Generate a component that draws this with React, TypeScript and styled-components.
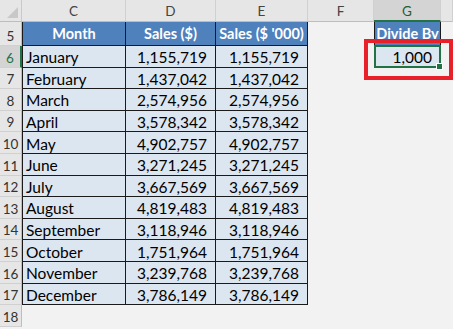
import React from 'react';
import styled, { createGlobalStyle, css } from 'styled-components';

const GlobalStyle = createGlobalStyle`
  html, body {
    margin: 0;
    padding: 0;
    background: #f2f2f2;
    overflow: hidden;
  }
`;

const SheetWrapper = styled.div`
  position: relative;
  width: 453px;
  height: 329px;
  overflow: hidden;
  background: #f2f2f2;
  font-family: Lato, 'Liberation Sans', sans-serif;
`;

const Grid = styled.div`
  display: grid;
  grid-template-columns: 22px 104px 90px 92px 66px 67px 1fr;
  grid-template-rows: 22px 24px repeat(13, 21.6px);
`;

const Corner = styled.div`
  background: #e6e6e6;
  border-right: 1px solid #c9c9c9;
  border-bottom: 1px solid #bdbdbd;
  position: relative;

  &::after {
    content: '';
    position: absolute;
    right: 3px;
    bottom: 3px;
    width: 0;
    height: 0;
    border-left: 11px solid transparent;
    border-bottom: 11px solid #c8c8c8;
  }
`;

const ColHead = styled.div<{ $active?: boolean }>`
  display: flex;
  align-items: center;
  justify-content: center;
  background: #e6e6e6;
  border-right: 1px solid #d0d0d0;
  border-bottom: 1px solid #bdbdbd;
  color: #444;
  font-size: 13.5px;
  padding-top: 1px;

  ${(p) =>
    p.$active &&
    css`
      background: #d4d4d4;
      border-bottom: 2px solid #217346;
      color: #1e5f3a;
    `}
`;

const RowHead = styled.div<{ $active?: boolean }>`
  display: flex;
  align-items: flex-end;
  justify-content: center;
  background: #e6e6e6;
  border-right: 1px solid #bdbdbd;
  border-bottom: 1px solid #d0d0d0;
  color: #333;
  font-size: 13.5px;
  padding-bottom: 1px;
  box-sizing: border-box;

  ${(p) =>
    p.$active &&
    css`
      background: #d4d4d4;
      border-right: 2px solid #217346;
      color: #217346;
    `}
`;

const HeadCell = styled.div<{ $first?: boolean }>`
  display: flex;
  align-items: center;
  justify-content: center;
  background: #4f81bd;
  color: #fff;
  font-weight: 700;
  font-size: 14.5px;
  white-space: nowrap;
  overflow: hidden;
  border-right: 1px solid #1a1a1a;
  border-bottom: 1px solid #1a1a1a;
  ${(p) => p.$first && 'border-left: 1px solid #1a1a1a;'}
  box-sizing: border-box;
`;

const DataCell = styled.div<{ $align?: 'left' | 'right'; $first?: boolean }>`
  display: flex;
  align-items: center;
  justify-content: ${(p) => (p.$align === 'left' ? 'flex-start' : 'flex-end')};
  padding: ${(p) => (p.$align === 'left' ? '2px 0 0 3px' : '2px 8px 0 0')};
  background: #dce6f1;
  color: #000;
  font-size: 15.5px;
  white-space: nowrap;
  border-right: 1px solid #1a1a1a;
  border-bottom: 1px solid #1a1a1a;
  ${(p) => p.$first && 'border-left: 1px solid #1a1a1a;'}
  box-sizing: border-box;
`;

const Blank = styled.div``;

const SelectedCell = styled.div`
  position: relative;
  display: flex;
  align-items: center;
  justify-content: flex-end;
  padding: 2px 7px 0 0;
  background: #dce6f1;
  color: #000;
  font-size: 15.5px;
  border: 2px solid #217346;
  margin: -1px 0 0 0;
  box-sizing: border-box;

  &::after {
    content: '';
    position: absolute;
    right: -4px;
    bottom: -4px;
    width: 5px;
    height: 5px;
    background: #217346;
    border: 1px solid #fff;
  }
`;

const Callout = styled.div`
  position: absolute;
  left: 364px;
  top: 39px;
  width: 89px;
  height: 41px;
  border: 4px solid #e8202a;
  box-sizing: border-box;
  pointer-events: none;
`;

const months: [string, string][] = [
  ['January', '1,155,719'],
  ['February', '1,437,042'],
  ['March', '2,574,956'],
  ['April', '3,578,342'],
  ['May', '4,902,757'],
  ['June', '3,271,245'],
  ['July', '3,667,569'],
  ['August', '4,819,483'],
  ['September', '3,118,946'],
  ['October', '1,751,964'],
  ['November', '3,239,768'],
  ['December', '3,786,149'],
];

const App = () => {
  return (
    <>
      <GlobalStyle />
      <SheetWrapper>
        <Grid>
          <Corner />
          <ColHead>C</ColHead>
          <ColHead>D</ColHead>
          <ColHead>E</ColHead>
          <ColHead>F</ColHead>
          <ColHead $active>G</ColHead>
          <ColHead />

          <RowHead>5</RowHead>
          <HeadCell $first>Month</HeadCell>
          <HeadCell>Sales ($)</HeadCell>
          <HeadCell>Sales ($ '000)</HeadCell>
          <Blank />
          <HeadCell $first>Divide By</HeadCell>
          <Blank />

          {months.map(([name, value], i) => (
            <React.Fragment key={name}>
              <RowHead $active={i === 0}>{i + 6}</RowHead>
              <DataCell $align="left" $first>
                {name}
              </DataCell>
              <DataCell>{value}</DataCell>
              <DataCell>{value}</DataCell>
              <Blank />
              {i === 0 ? <SelectedCell>1,000</SelectedCell> : <Blank />}
              <Blank />
            </React.Fragment>
          ))}

          <RowHead>18</RowHead>
          <Blank />
          <Blank />
          <Blank />
          <Blank />
          <Blank />
          <Blank />
        </Grid>
        <Callout />
      </SheetWrapper>
    </>
  );
};

export default App;
